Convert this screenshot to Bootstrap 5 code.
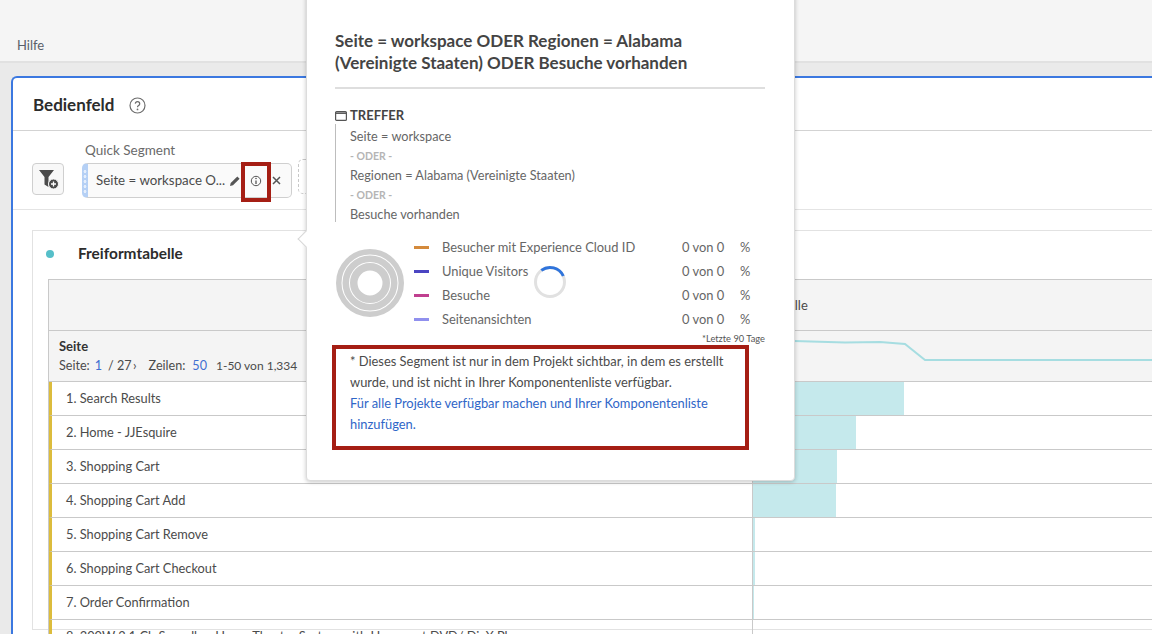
<!DOCTYPE html>
<html lang="de"><head><meta charset="utf-8"><title>Bedienfeld</title>
<link rel="stylesheet" href="https://cdn.jsdelivr.net/npm/bootstrap@5.3.0/dist/css/bootstrap.min.css">
<style>
html,body{height:634px;overflow:hidden}
body{background:#eaeaea;font-family:"Lato","Open Sans",sans-serif;font-size:13px;color:#4b4b4b;position:relative}
.topbar{height:63px;background:#f5f5f5;border-bottom:2px solid #e1e1e1;padding:37px 0 0 17px;line-height:16px;font-size:13px;color:#5a5f6a}
.panel-box{margin:13px 0 0 11px;background:#fff;border:2px solid #3b78e0;border-right:0;border-bottom:0;border-top-left-radius:6px;height:580px;overflow:hidden}
.panel-head{height:53px;padding:2px 0 0 20px;border-bottom:1px solid #d3d3d3;gap:15px}
.panel-title{font-size:17px;font-weight:700;color:#2c2c2c}
.seg-row{height:79px;border-bottom:1px solid #e4e4e4;padding:0 0 0 19px}
.filter-btn{width:32px;height:32px;border:1px solid #cfcfcf;border-radius:4px;background:#f8f8f8;margin-top:32px}
.seg-col{margin-left:18px;width:260px}
.seg-label{margin:10px 0 4px 3px;line-height:18px;font-size:13.5px;color:#6a6a6a}
.seg-chip{position:relative;width:210px;height:35px;border:1px solid #cfcfcf;border-radius:5px;background:#fafafa;border-left:6px solid #b5d0f5;padding-left:8px;font-size:13.3px}
.seg-chip::before{content:"";position:absolute;left:-5px;top:5px;width:4px;height:24px;background:radial-gradient(circle,#e4eefc 1.3px,transparent 1.6px) 0 0/4px 5px repeat-y}
.seg-name{width:133px;white-space:nowrap}
.seg-tools{gap:9px}
.seg-slot{width:30px;height:35px;border:1px dashed #c8c8c8;border-radius:5px;margin:28px 0 0 -44px}
.red-mark{position:absolute;left:241px;top:162px;width:30px;height:40px;border:4px solid #a51e14}
.table-card{margin:20px 0 0 19px;border:1px solid #e2e2e2;border-right:0;height:400px;padding:0 0 0 15px}
.table-title{height:48px;gap:24px;margin-left:-2px;padding-bottom:2px}
.dot-mark{width:8px;height:8px;border-radius:50%;background:#56bfc9}
.table-name{font-size:15.4px;font-weight:700;color:#2c2c2c}
.data-grid{border-top:1px solid #c9c9c9;border-left:1px solid #c9c9c9}
.grid-row{display:flex;border-bottom:1px solid #c9c9c9;height:34px}
.grid-head{background:#f4f4f4;height:51px}
.cell-a{width:704px;flex:none;border-right:1px solid #c9c9c9;padding-left:10px}
.cell-a.plain{border-right:0}
.cell-b{flex:1;position:relative;min-width:0}
.row-item{border-left:3px solid #dcbc3c}
.row-item .cell-a{width:701px;padding-left:14px;line-height:32px;font-size:12.8px;white-space:nowrap}
.bar-fill{height:100%;background:#c5e9ec}
.head-title{font-weight:700;font-size:13px;line-height:16px;margin-top:7px;color:#333}
.head-meta{font-size:12.6px;line-height:18px;margin-top:3px;white-space:nowrap}
.head-link{color:#3f6fd1}
.meta-a{margin:0 6px 0 5px}.meta-b{display:inline-block;width:20px;margin-right:5px;white-space:nowrap}.meta-c{margin-right:12px}.meta-d{margin:0 9px 0 7px}.meta-e{font-size:12px}
.col-name{padding:16px 0 0 33px;line-height:18px;font-size:13px}
.pop-box{position:absolute;left:306px;top:-10px;width:489px;height:491px;background:#fff;border:1px solid #dcdcdc;border-radius:4px;box-shadow:0 1px 4px rgba(0,0,0,.22);padding:39px 29px 0 28px;font-size:12.9px}
.pop-tip{position:absolute;left:-7px;top:242px;width:12px;height:12px;background:#fff;border-left:1px solid #d6d6d6;border-bottom:1px solid #d6d6d6;transform:rotate(45deg)}
.pop-title{font-size:17px;font-weight:700;line-height:22px;color:#444;padding-bottom:13px;border-bottom:2px solid #dedede;white-space:nowrap}
.hit-head{font-weight:700;font-size:13px;line-height:18px;color:#444;margin-top:17px;gap:3px}
.hit-list{border-left:1px solid #bdbdbd;padding:3px 0 0 14px;margin-top:0;height:98px;line-height:19.5px;font-size:12.7px;color:#666}
.hit-or{font-size:10.5px;font-weight:700;color:#b5b5b5}
.stats{margin-top:13px;height:96px}
.ring-box{width:79px;flex:none;padding:14px 0 0 1px}
.stat-rows{flex:1;position:relative}
.stat-row{height:24px;line-height:24px;color:#666}
.stat-line{width:15px;height:3px;flex:none;margin-right:13px}
.stat-name{width:240px;white-space:nowrap;font-size:12.9px}
.stat-val{width:58px;white-space:nowrap}
.spin-box{position:absolute;left:119px;top:30px}
.note-small{font-size:9.3px;text-align:right;line-height:12px;color:#555;margin-top:2px}
.note-box{margin:0 0 0 -3px;width:417px;height:105px;border:4px solid #a51e14;padding:2px 14px;line-height:21px;color:#4b4b4b}
.note-link{color:#2f66c8;text-decoration:none}
</style></head><body>
<div class="topbar">Hilfe</div>
<div class="panel-box">
  <div class="panel-head d-flex align-items-center">
    <span class="panel-title">Bedienfeld</span>
    <svg width="17" height="17" viewBox="0 0 17 17"><circle cx="8.5" cy="8.5" r="7.500" fill="none" stroke="#6e6e6e" stroke-width="1.2"/><path d="M6.3 6.6a2.2 2.1 0 1 1 3.3 1.9c-.8.5-1.1.9-1.1 1.7" fill="none" stroke="#6e6e6e" stroke-width="1.3"/><circle cx="8.5" cy="12.4" r=".9" fill="#6e6e6e"/></svg>
  </div>
  <div class="seg-row d-flex">
    <div class="filter-btn d-flex align-items-center justify-content-center">
      <svg width="24" height="24" viewBox="0 0 24 24"><path d="M3 3h15l-5.500 7v10l-4-2.600V10z" fill="#4b4b4b"/><circle cx="17.500" cy="17" r="5" fill="#4b4b4b" stroke="#f8f8f8"/><path d="M17.500 14.500v5M15 17h5" stroke="#fff" stroke-width="1.300"/></svg>
    </div>
    <div class="seg-col">
      <div class="seg-label">Quick Segment</div>
      <div class="seg-chip d-flex align-items-center">
        <span class="seg-name">Seite = workspace O...</span>
        <div class="seg-tools d-flex align-items-center">
          <svg width="12" height="12" viewBox="0 0 12 12"><path d="M1 11l.7-3L8.300 1.400l2.300 2.300L4 10.300z" fill="#555"/></svg>
          <svg width="12" height="12" viewBox="0 0 12 12"><circle cx="6" cy="6" r="4.700" fill="none" stroke="#555"/><path d="M6 5.400V9" stroke="#555" stroke-width="1.300"/><circle cx="6" cy="3.500" r=".8" fill="#555"/></svg>
          <svg width="11" height="11" viewBox="0 0 11 11"><path d="M2 2l7 7M9 2l-7 7" stroke="#555" stroke-width="1.500"/></svg>
        </div>
      </div>
    </div>
    <div class="seg-slot"></div>
  </div>
  <div class="table-card">
    <div class="table-title d-flex align-items-center">
      <span class="dot-mark"></span><span class="table-name">Freiformtabelle</span>
    </div>
    <div class="data-grid">
      <div class="grid-row grid-head"><div class="cell-a plain"></div><div class="cell-b col-name">Alle</div></div>
      <div class="grid-row grid-head">
        <div class="cell-a plain">
          <div class="head-title">Seite</div>
          <div class="head-meta">Seite:<span class="head-link meta-a">1</span><span class="meta-b">/ 27</span><span class="meta-c">›</span>Zeilen:<span class="head-link meta-d">50</span><span class="meta-e">1-50 von 1,334</span></div>
        </div>
        <div class="cell-b">
          <svg width="400" height="50" viewBox="753 331 400 50" class="d-block"><polyline points="753,340 794,341 845,342.500 880,342 905,344 925,360 1153,360" fill="none" stroke="#a6dde1" stroke-width="2"/></svg>
        </div>
      </div>
      <div class="grid-row row-item"><div class="cell-a">1. Search Results</div><div class="cell-b"><div class="bar-fill" style="width:151px"></div></div></div>
      <div class="grid-row row-item"><div class="cell-a">2. Home - JJEsquire</div><div class="cell-b"><div class="bar-fill" style="width:103px"></div></div></div>
      <div class="grid-row row-item"><div class="cell-a">3. Shopping Cart</div><div class="cell-b"><div class="bar-fill" style="width:84px"></div></div></div>
      <div class="grid-row row-item"><div class="cell-a">4. Shopping Cart Add</div><div class="cell-b"><div class="bar-fill" style="width:83px"></div></div></div>
      <div class="grid-row row-item"><div class="cell-a">5. Shopping Cart Remove</div><div class="cell-b"><div class="bar-fill" style="width:2px"></div></div></div>
      <div class="grid-row row-item"><div class="cell-a">6. Shopping Cart Checkout</div><div class="cell-b"><div class="bar-fill" style="width:2px"></div></div></div>
      <div class="grid-row row-item"><div class="cell-a">7. Order Confirmation</div><div class="cell-b"><div class="bar-fill" style="width:1px"></div></div></div>
      <div class="grid-row row-item"><div class="cell-a">8. 300W 2.1 Ch Soundbar Home Theater System with Hypermat DVD/ DivX Player</div><div class="cell-b"></div></div>
    </div>
  </div>
</div>
<div class="red-mark"></div>
<div class="pop-box">
  <div class="pop-tip"></div>
  <div class="pop-title">Seite = workspace ODER Regionen = Alabama<br>(Vereinigte Staaten) ODER Besuche vorhanden</div>
  <div class="hit-head d-flex align-items-center">
    <svg width="12" height="11" viewBox="0 0 12 11"><rect x=".6" y="1.600" width="10.800" height="8.800" rx="1" fill="none" stroke="#555" stroke-width="1.200"/><path d="M.6 3.200h10.800" stroke="#555" stroke-width="1.500"/></svg>
    TREFFER
  </div>
  <div class="hit-list">
    <div>Seite = workspace</div><div class="hit-or">- ODER -</div>
    <div>Regionen = Alabama (Vereinigte Staaten)</div><div class="hit-or">- ODER -</div>
    <div>Besuche vorhanden</div>
  </div>
  <div class="stats d-flex">
    <div class="ring-box">
      <svg width="68" height="68" viewBox="0 0 68 68" class="d-block"><circle cx="34" cy="34" r="31.250" fill="none" stroke="#cdcdcd" stroke-width="5.500"/><circle cx="34" cy="34" r="24.250" fill="none" stroke="#cdcdcd" stroke-width="6.500"/><circle cx="34" cy="34" r="16.250" fill="none" stroke="#cdcdcd" stroke-width="7.500"/></svg>
    </div>
    <div class="stat-rows">
      <div class="stat-row d-flex align-items-center"><span class="stat-line" style="background:#d48a3c"></span><span class="stat-name">Besucher mit Experience Cloud ID</span><span class="stat-val">0 von 0</span><span>%</span></div>
      <div class="stat-row d-flex align-items-center"><span class="stat-line" style="background:#4b45c2"></span><span class="stat-name">Unique Visitors</span><span class="stat-val">0 von 0</span><span>%</span></div>
      <div class="stat-row d-flex align-items-center"><span class="stat-line" style="background:#c03f8f"></span><span class="stat-name">Besuche</span><span class="stat-val">0 von 0</span><span>%</span></div>
      <div class="stat-row d-flex align-items-center"><span class="stat-line" style="background:#9090ee"></span><span class="stat-name">Seitenansichten</span><span class="stat-val">0 von 0</span><span>%</span></div>
      <svg class="spin-box" width="34" height="34" viewBox="0 0 34 34"><circle cx="17" cy="17" r="14.500" fill="none" stroke="#e1e1e1" stroke-width="3"/><path d="M8.300 5.400A14.500 14.500 0 0 1 30.300 11" fill="none" stroke="#2f74dc" stroke-width="3"/></svg>
    </div>
  </div>
  <div class="note-small">*Letzte 90 Tage</div>
  <div class="note-box">* Dieses Segment ist nur in dem Projekt sichtbar, in dem es erstellt wurde, und ist nicht in Ihrer Komponentenliste verfügbar.<br><a class="note-link" href="#">Für alle Projekte verfügbar machen und Ihrer Komponentenliste hinzufügen.</a></div>
</div>
<script src="https://cdn.jsdelivr.net/npm/bootstrap@5.3.0/dist/js/bootstrap.bundle.min.js"></script>
</body></html>
